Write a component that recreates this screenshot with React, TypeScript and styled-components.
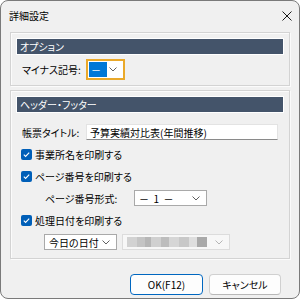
import styled, { createGlobalStyle } from "styled-components";

const GlobalStyle = createGlobalStyle`
  html, body {
    margin: 0;
    padding: 0;
    background: #ffffff;
  }
  body {
    font-family: "Noto Sans CJK JP", "Noto Sans", sans-serif;
    font-size: 10px;
    font-feature-settings: "palt";
    color: #000;
  }
`;

const Window = styled.div`
  width: 300px;
  height: 299px;
  box-sizing: border-box;
  border: 1px solid #7a7a7a;
  border-radius: 8px;
  background: #f0f0f0;
  display: flex;
  flex-direction: column;
  overflow: hidden;
`;

const TitleBar = styled.div`
  height: 29px;
  display: flex;
  align-items: center;
  justify-content: space-between;
  padding: 0 7px 0 8px;
  font-size: 10px;
`;

const Body = styled.div`
  padding: 2px 9px 0 9px;
  display: flex;
  flex-direction: column;
  gap: 4px;
`;

const Group = styled.div`
  border: 1px solid #d3d3d3;
  box-shadow: inset 1px 1px 0 #fbfbfb, 1px 1px 0 #fbfbfb;
  padding: 5px;
  display: flex;
  flex-direction: column;
`;

const GroupHeader = styled.div`
  height: 17px;
  box-sizing: border-box;
  background: #44546a;
  border: 1px solid #ffffff;
  color: #fff;
  padding-left: 3px;
  display: flex;
  align-items: center;
`;

const Rows = styled.div<{ $top: number }>`
  margin-top: ${(p) => p.$top}px;
  display: flex;
  flex-direction: column;
`;

const Row = styled.div<{ $h?: number; $indent?: number }>`
  height: ${(p) => p.$h ?? 22}px;
  display: flex;
  align-items: center;
  padding-left: ${(p) => p.$indent ?? 6}px;
`;

const Label = styled.span<{ $w?: number }>`
  width: ${(p) => (p.$w ? `${p.$w}px` : "auto")};
  flex-shrink: 0;
  white-space: nowrap;
`;

const TextInput = styled.div`
  width: 192px;
  height: 16px;
  box-sizing: border-box;
  background: #fff;
  border: 1px solid #e3e3e3;
  border-bottom-color: #8a8a8a;
  padding-left: 3px;
  display: flex;
  align-items: center;
  white-space: nowrap;
`;

const Select = styled.div<{
  $w: number;
  $h?: number;
  $focus?: boolean;
  $disabled?: boolean;
  $ml?: number;
}>`
  width: ${(p) => p.$w}px;
  height: ${(p) => p.$h ?? 16}px;
  margin-left: ${(p) => p.$ml ?? 0}px;
  box-sizing: border-box;
  background: ${(p) => (p.$disabled ? "#f7f7f7" : "#fff")};
  border: ${(p) => (p.$focus ? "2px solid #eaa92a" : "1px solid #a9a9a9")};
  border-color: ${(p) => (p.$disabled ? "#dcdcdc" : undefined)};
  display: flex;
  align-items: center;
  justify-content: space-between;
  padding: ${(p) => (p.$focus ? "1px 6px 1px 1px" : "0 6px 0 4px")};
  white-space: pre;
`;

const Highlight = styled.span`
  background: #0078d7;
  color: #fff;
  width: 18px;
  height: 15px;
  display: flex;
  align-items: center;
  padding-left: 2px;
  box-sizing: border-box;
`;

const Blurred = styled.div`
  width: 80px;
  height: 10px;
  background: linear-gradient(
    90deg,
    #d2d2d2 0 10px,
    #c4c4c4 10px 18px,
    #b6b6b6 18px 24px,
    #d0d0d0 24px 34px,
    #bdbdbd 34px 42px,
    #d6d6d6 42px 52px,
    #c8c8c8 52px 62px,
    #dedede 62px 70px,
    #a9a9a9 70px 80px
  );
  filter: blur(0.6px);
`;

const CheckBox = styled.span`
  width: 11px;
  height: 11px;
  border-radius: 2px;
  background: #005fb8;
  display: inline-flex;
  align-items: center;
  justify-content: center;
  margin-right: 3px;
  flex-shrink: 0;
`;

const Footer = styled.div`
  margin-top: 11px;
  padding-right: 9px;
  display: flex;
  justify-content: flex-end;
  gap: 6px;
`;

const Button = styled.div<{ $primary?: boolean; $w: number }>`
  width: ${(p) => p.$w}px;
  height: 21px;
  box-sizing: border-box;
  border-radius: 4px;
  background: #fdfdfd;
  border: 1px solid ${(p) => (p.$primary ? "#0067c0" : "#d0d0d0")};
  border-bottom-color: ${(p) => (p.$primary ? "#0067c0" : "#b8b8b8")};
  display: flex;
  align-items: center;
  justify-content: center;
`;

const Chevron = ({ color = "#606060" }: { color?: string }) => (
  <svg width="8" height="5" viewBox="0 0 8 5">
    <polyline points="0.5,0.5 4,4 7.5,0.5" fill="none" stroke={color} strokeWidth="1" />
  </svg>
);

const Check = () => (
  <svg width="9" height="9" viewBox="0 0 9 9">
    <polyline points="1.8,4.6 3.6,6.4 7.2,2.6" fill="none" stroke="#fff" strokeWidth="1.1" />
  </svg>
);

const CloseIcon = () => (
  <svg width="10" height="10" viewBox="0 0 10 10">
    <line x1="0.5" y1="0.5" x2="9.5" y2="9.5" stroke="#1a1a1a" strokeWidth="1" />
    <line x1="9.5" y1="0.5" x2="0.5" y2="9.5" stroke="#1a1a1a" strokeWidth="1" />
  </svg>
);

export default function App() {
  return (
    <>
      <GlobalStyle />
      <Window>
        <TitleBar>
          <span>詳細設定</span>
          <CloseIcon />
        </TitleBar>
        <Body>
          <Group>
            <GroupHeader>オプション</GroupHeader>
            <Rows $top={4}>
              <Row $h={21}>
                <Label $w={64}>マイナス記号:</Label>
                <Select $w={39} $h={21} $focus>
                  <Highlight>－</Highlight>
                  <Chevron />
                </Select>
              </Row>
            </Rows>
          </Group>

          <Group>
            <GroupHeader>ヘッダー・フッター</GroupHeader>
            <Rows $top={8}>
              <Row>
                <Label $w={64}>帳票タイトル:</Label>
                <TextInput>予算実績対比表(年間推移)</TextInput>
              </Row>
              <Row $indent={5}>
                <CheckBox>
                  <Check />
                </CheckBox>
                <Label>事業所名を印刷する</Label>
              </Row>
              <Row $indent={5}>
                <CheckBox>
                  <Check />
                </CheckBox>
                <Label>ページ番号を印刷する</Label>
              </Row>
              <Row $indent={29}>
                <Label $w={89}>ページ番号形式:</Label>
                <Select $w={73}>
                  <span>－  1  －</span>
                  <Chevron />
                </Select>
              </Row>
              <Row $indent={5}>
                <CheckBox>
                  <Check />
                </CheckBox>
                <Label>処理日付を印刷する</Label>
              </Row>
              <Row $indent={28}>
                <Select $w={73}>
                  <span>今日の日付</span>
                  <Chevron />
                </Select>
                <Select $w={108} $ml={5} $disabled>
                  <Blurred />
                  <Chevron color="#b5b5b5" />
                </Select>
              </Row>
            </Rows>
          </Group>

          <Footer>
            <Button $primary $w={73}>
              OK(F12)
            </Button>
            <Button $w={72}>キャンセル</Button>
          </Footer>
        </Body>
      </Window>
    </>
  );
}
